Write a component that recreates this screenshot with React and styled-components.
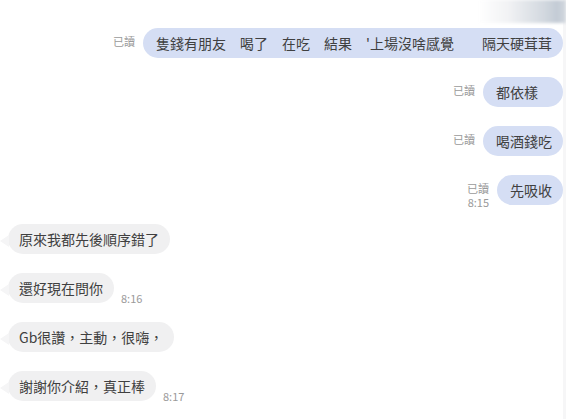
import styled, { createGlobalStyle } from "styled-components";

const sent = [
  { text: "隻錢有朋友　喝了　在吃　結果　'上場沒啥感覺　　隔天硬茸茸", read: true },
  { text: "都依樣　", read: true },
  { text: "喝酒錢吃", read: true },
  { text: "先吸收", read: true, time: "8:15" },
];

const received = [
  { text: "原來我都先後順序錯了" },
  { text: "還好現在問你", time: "8:16" },
  { text: "Gb很讚，主動，很嗨，" },
  { text: "謝謝你介紹，真正棒", time: "8:17" },
  { text: "那我再試試看" },
];

const Chat = () => {
  return (
    <>
      <GlobalStyle />
      <Page>
        <Thread>
          {sent.map((m, i) => (
            <Row key={'s' + i} $mine>
              <Meta>
                {m.read && <span>已讀</span>}
                {m.time && <span>{m.time}</span>}
              </Meta>
              <Bubble $mine>{m.text}</Bubble>
            </Row>
          ))}
          {received.map((m, i) => (
            <Row key={'r' + i}>
              <Bubble>{m.text}</Bubble>
              {m.time && <Time>{m.time}</Time>}
            </Row>
          ))}
        </Thread>
        <Rail />
        <Shade />
      </Page>
    </>
  );
};

const GlobalStyle = createGlobalStyle`
  html, body {
    margin: 0;
    padding: 0;
    background: #fff;
    overflow: hidden;
  }
  body {
    font-family: "Noto Sans CJK TC", "Noto Sans", sans-serif;
  }
`;

const Page = styled.div`
  width: 566px;
  height: 419px;
  display: flex;
  position: relative;
  overflow: hidden;
`;

const Thread = styled.div`
  flex: 1;
  display: flex;
  flex-direction: column;
  gap: 19px;
  padding: 28px 0 0 8px;
`;

const Rail = styled.div`
  width: 3px;
  background: #f6f6f7;
`;

const Row = styled.div`
  display: flex;
  justify-content: ${p => (p.$mine ? 'flex-end' : 'flex-start')};
  align-items: ${p => (p.$mine ? 'flex-start' : 'flex-end')};
  gap: ${p => (p.$mine ? '8px' : '7px')};
`;

const Bubble = styled.div`
  position: relative;
  height: 30px;
  line-height: 30px;
  padding: ${p => (p.$mine ? '0 11px 0 13px' : '0 11px')};
  border-radius: 15px;
  background: ${p => (p.$mine ? '#d5def4' : '#f0f0f1')};
  color: #404040;
  font-size: 14px;
  white-space: pre;
  flex-shrink: 0;

  &::before {
    content: "";
    display: ${p => (p.$mine ? 'none' : 'block')};
    position: absolute;
    left: -8px;
    top: 11px;
    border-style: solid;
    border-width: 6px 9px 6px 0;
    border-color: transparent #f5f5f6 transparent transparent;
  }
`;

const Meta = styled.div`
  display: flex;
  flex-direction: column;
  align-items: flex-end;
  font-size: 11px;
  line-height: 14px;
  color: #9a9a9a;
  margin: 6px 0 -6px;
`;

const Time = styled.span`
  font-size: 11px;
  line-height: 14px;
  color: #9a9a9a;
  margin-bottom: -2px;
`;

const Shade = styled.div`
  position: absolute;
  top: 0;
  right: 0;
  width: 88px;
  height: 23px;
  background: linear-gradient(90deg, #ffffff 0%, #f1f2f4 35%, #d2d8df 75%, #c3cbd5 90%, #d3d9df 100%);
  filter: blur(1.5px);
`;

export default Chat;
